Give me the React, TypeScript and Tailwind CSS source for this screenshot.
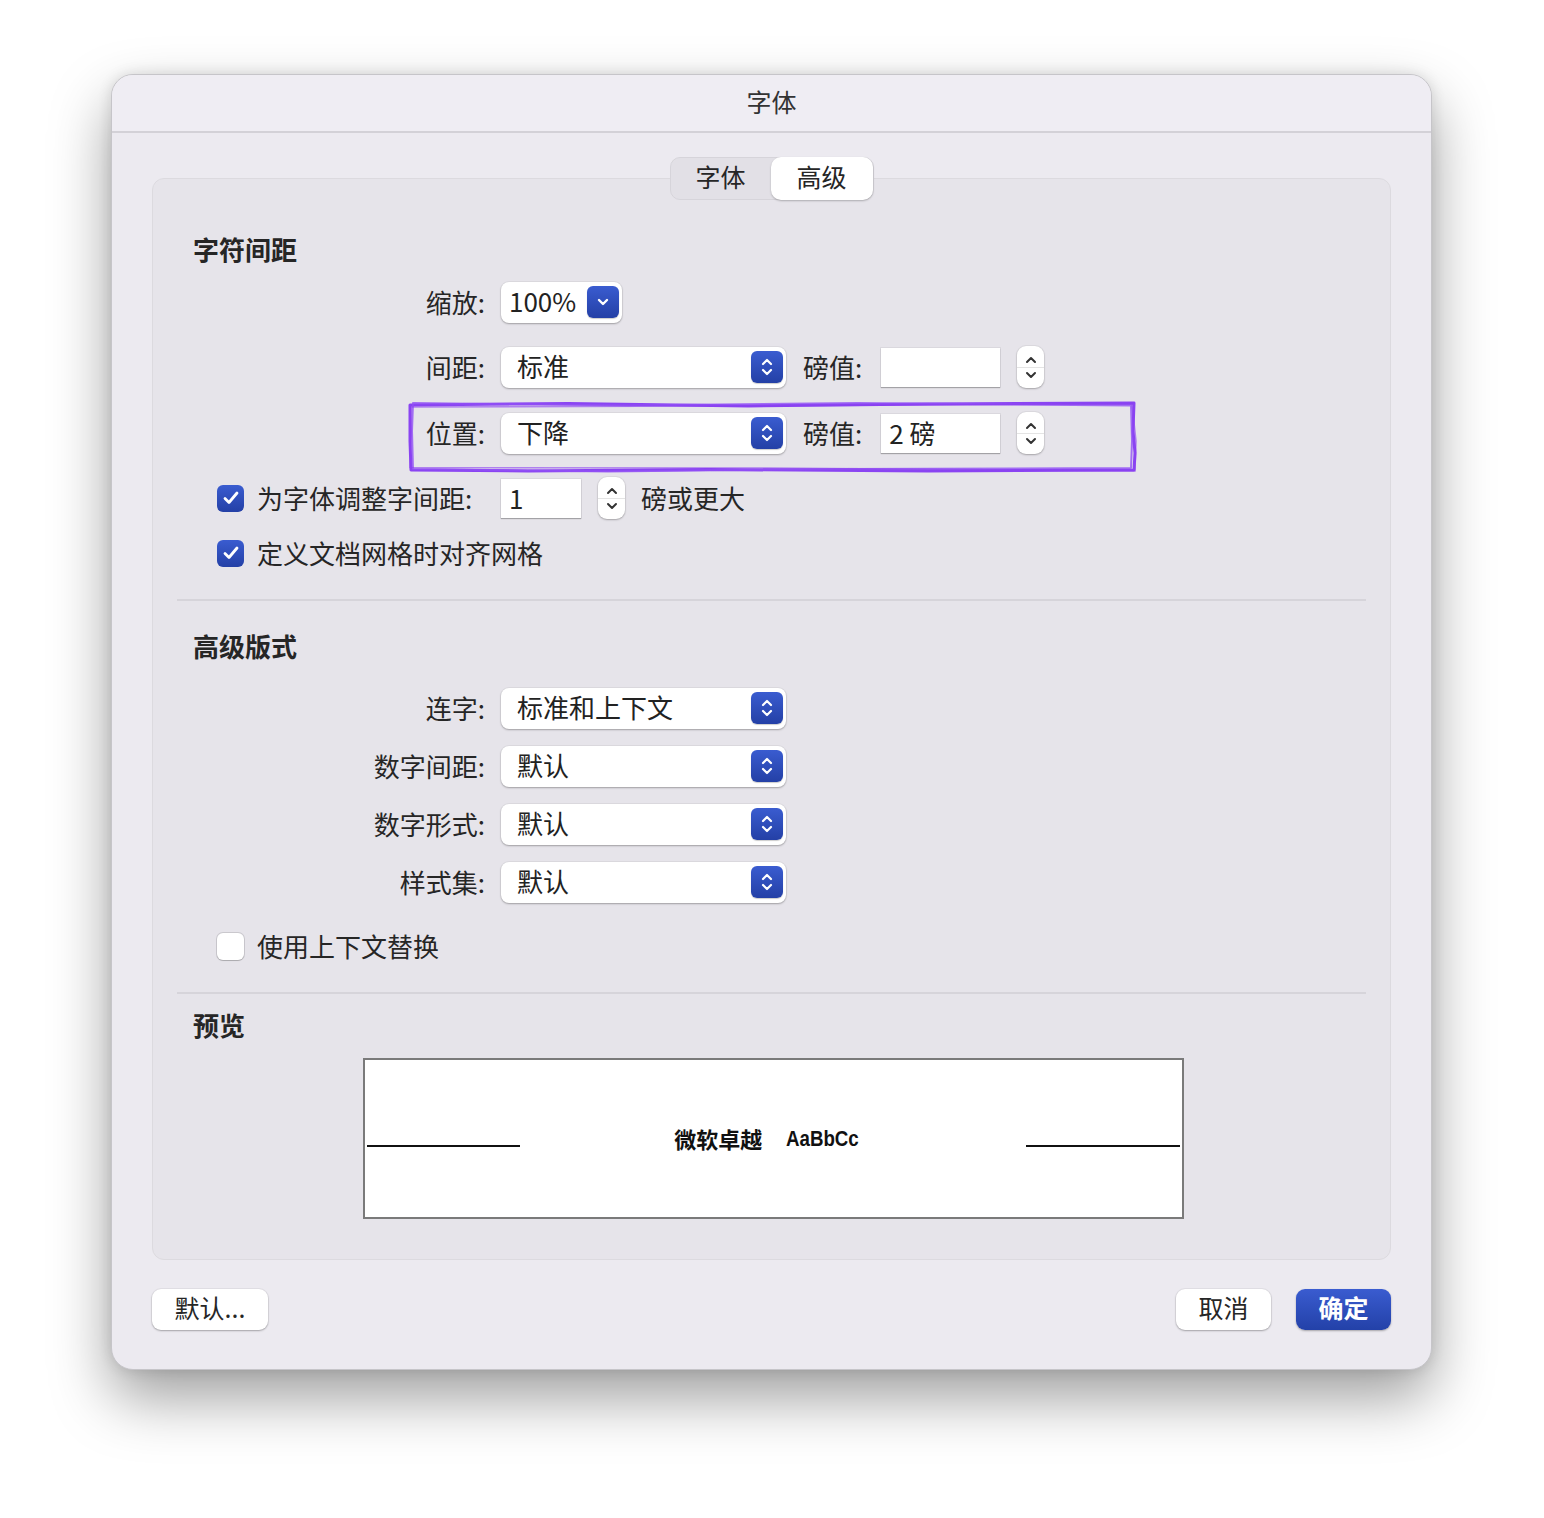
import React from 'react';

const font = "font-['Noto_Sans_CJK_SC','Noto_Sans',sans-serif]";

function UpDown({ color = '#fff', w = 14, h = 22 }: { color?: string; w?: number; h?: number }) {
  return (
    <svg width={w} height={h} viewBox="0 0 14 22" fill="none">
      <polyline points="3,8 7,4 11,8" stroke={color} strokeWidth="2.2" strokeLinecap="round" strokeLinejoin="round" />
      <polyline points="3,14 7,18 11,14" stroke={color} strokeWidth="2.2" strokeLinecap="round" strokeLinejoin="round" />
    </svg>
  );
}

function BlueBtn({ down }: { down?: boolean }) {
  return (
    <div className="flex h-[32px] w-[32px] items-center justify-center rounded-[6px] bg-gradient-to-b from-[#3a5cd0] to-[#2440a6] shadow-[0_1px_1px_rgba(0,0,0,0.2)]">
      {down ? (
        <svg width="14" height="10" viewBox="0 0 14 10" fill="none">
          <polyline points="3,3 7,7 11,3" stroke="#fff" strokeWidth="2.4" strokeLinecap="round" strokeLinejoin="round" />
        </svg>
      ) : (
        <UpDown />
      )}
    </div>
  );
}

function Popup({ value, className = 'w-[285px]', down }: { value: string; className?: string; down?: boolean }) {
  return (
    <div className={`flex h-[41px] shrink-0 items-center justify-between rounded-[8px] bg-white pr-[3px] shadow-[0_1px_2px_rgba(0,0,0,0.28),0_0_0_1px_rgba(0,0,0,0.04)] ${down ? 'pl-2' : 'pl-4'} ${className}`}>
      <span className="-mt-[2px] text-[26px] leading-none text-[#222]">{value}</span>
      <BlueBtn down={down} />
    </div>
  );
}

function Field({ value = '', className = 'w-[119px]' }: { value?: string; className?: string }) {
  return (
    <div className={`flex h-[39px] shrink-0 items-center bg-white pl-2 text-[26px] text-[#222] shadow-[0_1px_1px_rgba(0,0,0,0.25),0_0_0_1px_rgba(0,0,0,0.05)] ${className}`}>
      <span className="-mt-[2px]">{value}</span>
    </div>
  );
}

function Stepper() {
  return (
    <div className="flex h-[42px] w-[27px] shrink-0 flex-col items-center justify-center rounded-[9px] bg-white shadow-[0_1px_2px_rgba(0,0,0,0.25),0_0_0_1px_rgba(0,0,0,0.04)]">
      <svg width="14" height="14" viewBox="0 0 14 14" fill="none">
        <polyline points="3,9 7,5 11,9" stroke="#333" strokeWidth="2" strokeLinecap="round" strokeLinejoin="round" />
      </svg>
      <div className="h-px w-full bg-[#e4e4e4]" />
      <svg width="14" height="14" viewBox="0 0 14 14" fill="none">
        <polyline points="3,5 7,9 11,5" stroke="#333" strokeWidth="2" strokeLinecap="round" strokeLinejoin="round" />
      </svg>
    </div>
  );
}

function Check({ on }: { on: boolean }) {
  return on ? (
    <div className="flex h-[27px] w-[27px] shrink-0 items-center justify-center rounded-[6px] bg-gradient-to-b from-[#3a5cd0] to-[#2440a6]">
      <svg width="18" height="16" viewBox="0 0 18 16" fill="none">
        <polyline points="3,8.5 7,12.5 15,3" stroke="#fff" strokeWidth="2.8" strokeLinecap="round" strokeLinejoin="round" />
      </svg>
    </div>
  ) : (
    <div className="h-[27px] w-[27px] shrink-0 rounded-[6px] bg-white shadow-[0_0_0_1px_rgba(0,0,0,0.12),0_1px_1px_rgba(0,0,0,0.15)]" />
  );
}

function Row({ label, children }: { label: string; children: React.ReactNode }) {
  return (
    <div className="flex h-[44px] items-center">
      <div className="-mt-[2px] w-[308px] shrink-0 text-right text-[26px] text-[#262626]">{label}</div>
      <div className="ml-4 flex items-center">{children}</div>
    </div>
  );
}

function Annotation() {
  return (
    <svg className="pointer-events-none absolute left-[231px] top-[-10px]" width="730" height="73" viewBox="0 0 730 73" fill="none">
      <path d="M2 4 L160 2.5 L340 5 L520 3 L726 2 L725 30 L727 52 L726 69 L520 70 L300 68.5 L120 70 L3 69 L2 40 Z" stroke="#8a44f2" strokeWidth="3" strokeLinejoin="round" />
      <path d="M5 2 L220 4.5 L450 2 L723 4.5 L724 40 L723 67 L430 68 L200 70.5 L5 68 L4 30 Z" stroke="#9150f5" strokeWidth="2" strokeLinejoin="round" opacity="0.8" />
      <path d="M3 6 L300 5 L724 3 L728 40 L727 70 L360 67 L2 66.5 L3 35 Z" stroke="#8a3ff0" strokeWidth="1.5" opacity="0.6" />
    </svg>
  );
}

export default function App() {
  return (
    <div className={`min-h-[1518px] w-full bg-white pt-[74px] ${font}`}>
      <div className="ml-[111px] flex w-[1321px] flex-col overflow-hidden rounded-[22px] border border-[#c6c5c9] bg-[#eceaf0] shadow-[0_28px_60px_rgba(0,0,0,0.38),0_0_14px_rgba(0,0,0,0.12)]">
        {/* Title bar */}
        <div className="flex h-[58px] items-center justify-center border-b-2 border-[#d3d1d7] bg-[#efedf3] text-[25px] text-[#333]">
          <span className="-mt-[2px]">字体</span>
        </div>

        <div className="px-[40px] pb-[39px] pt-[45px]">
          {/* Group box */}
          <div className="relative rounded-[12px] border border-[#dcdadf] bg-[#e6e4ea] px-6 pb-[40px] pt-[51px]">
            <div className="absolute left-1/2 top-[-22px] flex h-[43px] -translate-x-1/2 items-center rounded-[10px] border border-[#d6d4da] bg-[#e2e0e6] text-[25px] text-[#262626]">
              <div className="flex h-full w-[100px] items-center justify-center pb-[3px]">字体</div>
              <div className="flex h-[43px] w-[102px] items-center justify-center rounded-[10px] bg-white pb-[3px] shadow-[0_1px_2px_rgba(0,0,0,0.25)]">高级</div>
            </div>

            <div className="flex h-[40px] items-center pb-[3px] pl-4 text-[26px] font-bold text-[#262626]">字符间距</div>

            <div className="mt-[10px]">
              <Row label="缩放:">
                <Popup value="100%" className="w-[121px]" down />
              </Row>
            </div>

            <div className="mt-[21px]">
              <Row label="间距:">
                <Popup value="标准" />
                <span className="-mt-[2px] ml-[17px] text-[26px] text-[#262626]">磅值:</span>
                <Field className="ml-[19px] w-[119px]" />
                <div className="ml-[17px]"><Stepper /></div>
              </Row>
            </div>

            <div className="relative mt-[22px]">
              <Row label="位置:">
                <Popup value="下降" />
                <span className="-mt-[2px] ml-[17px] text-[26px] text-[#262626]">磅值:</span>
                <Field value="2 磅" className="ml-[19px] w-[119px]" />
                <div className="ml-[17px]"><Stepper /></div>
              </Row>
              <Annotation />
            </div>

            <div className="mt-[21px] flex h-[44px] items-center">
              <div className="flex w-[324px] shrink-0 items-center pl-10">
                <Check on />
                <span className="-mt-[2px] ml-[13px] text-[26px] text-[#262626]">为字体调整字间距:</span>
              </div>
              <Field value="1" className="w-[80px]" />
              <div className="ml-[17px]"><Stepper /></div>
              <span className="-mt-[2px] ml-4 text-[26px] text-[#262626]">磅或更大</span>
            </div>

            <div className="mt-[11px] flex h-[44px] items-center pl-10">
              <Check on />
              <span className="-mt-[2px] ml-[13px] text-[26px] text-[#262626]">定义文档网格时对齐网格</span>
            </div>

            <div className="mt-[24px] h-[2px] bg-[#d6d4da]" />

            <div className="mt-[26px] flex h-[40px] items-center pb-[3px] pl-4 text-[26px] font-bold text-[#262626]">高级版式</div>

            <div className="mt-[19px]">
              <Row label="连字:"><Popup value="标准和上下文" /></Row>
            </div>
            <div className="mt-[14px]">
              <Row label="数字间距:"><Popup value="默认" /></Row>
            </div>
            <div className="mt-[14px]">
              <Row label="数字形式:"><Popup value="默认" /></Row>
            </div>
            <div className="mt-[14px]">
              <Row label="样式集:"><Popup value="默认" /></Row>
            </div>

            <div className="mt-[20px] flex h-[44px] items-center pl-10">
              <Check on={false} />
              <span className="-mt-[2px] ml-[13px] text-[26px] text-[#262626]">使用上下文替换</span>
            </div>

            <div className="mt-[24px] h-[2px] bg-[#d6d4da]" />

            <div className="mt-[12px] flex h-[40px] items-center pb-[3px] pl-4 text-[26px] font-bold text-[#262626]">预览</div>

            <div className="ml-[186px] mt-[12px] flex h-[161px] w-[821px] items-center border-2 border-[#7a7a7a] bg-white px-[2px]">
              <div className="mt-[14px] h-[2px] w-[153px] bg-[#111]" />
              <div className="flex flex-1 items-center justify-center gap-[24px] text-[#111]">
                <span className="text-[22px] font-bold">微软卓越</span>
                <span className="origin-left scale-x-[0.85] font-['Liberation_Sans',sans-serif] text-[22px] font-bold">AaBbCc</span>
              </div>
              <div className="mt-[14px] h-[2px] w-[154px] bg-[#111]" />
            </div>
          </div>

          {/* Buttons */}
          <div className="mt-[29px] flex items-center">
            <div className="flex h-[41px] w-[116px] items-center justify-center rounded-[9px] bg-white pb-[3px] text-[25px] text-[#262626] shadow-[0_1px_2px_rgba(0,0,0,0.28),0_0_0_1px_rgba(0,0,0,0.04)]">
              默认...
            </div>
            <div className="ml-auto flex h-[41px] w-[95px] items-center justify-center rounded-[9px] bg-white pb-[3px] text-[25px] text-[#262626] shadow-[0_1px_2px_rgba(0,0,0,0.28),0_0_0_1px_rgba(0,0,0,0.04)]">
              取消
            </div>
            <div className="ml-[25px] flex h-[41px] w-[95px] items-center justify-center rounded-[9px] bg-gradient-to-b from-[#3a5cd0] to-[#2341a8] pb-[3px] text-[25px] font-semibold text-white shadow-[0_1px_2px_rgba(0,0,0,0.3)]">
              确定
            </div>
          </div>
        </div>
      </div>
    </div>
  );
}
